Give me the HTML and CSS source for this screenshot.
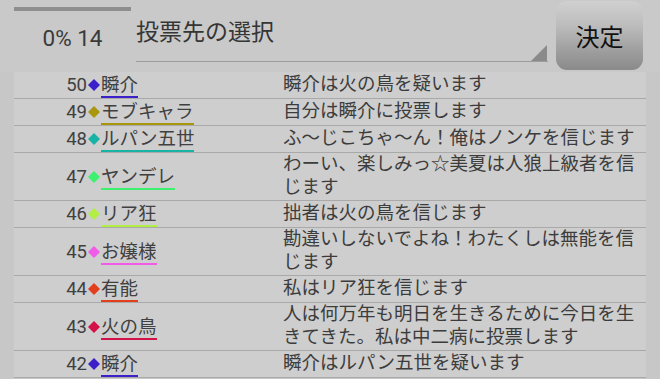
FILE: index.html
```html
<!DOCTYPE html>
<html lang="ja">
<head>
<meta charset="utf-8">
<link rel="stylesheet" href="styles.css">
</head>
<body>
<div class="header">
  <div class="progress-col">
    <div class="progress-bar"></div>
    <div class="progress-text">0% 14</div>
  </div>
  <div class="spinner">
    <span class="spinner-text">投票先の選択</span>
    <span class="spinner-arrow"></span>
  </div>
  <div class="decide-btn">決定</div>
</div>
<div class="list">
  <div class="row">
    <div class="who"><span class="num">50</span><svg class="dia" viewBox="0 0 12 12"><polygon points="6,0 12,6 6,12 0,6" fill="#3b1fc8"/></svg><span class="name c-shun">瞬介</span></div>
    <div class="msg">瞬介は火の鳥を疑います</div>
  </div>
  <div class="row">
    <div class="who"><span class="num">49</span><svg class="dia" viewBox="0 0 12 12"><polygon points="6,0 12,6 6,12 0,6" fill="#a8960f"/></svg><span class="name c-mob">モブキャラ</span></div>
    <div class="msg">自分は瞬介に投票します</div>
  </div>
  <div class="row">
    <div class="who"><span class="num">48</span><svg class="dia" viewBox="0 0 12 12"><polygon points="6,0 12,6 6,12 0,6" fill="#19b3a6"/></svg><span class="name c-lupin">ルパン五世</span></div>
    <div class="msg">ふ〜じこちゃ〜ん！俺はノンケを信じます</div>
  </div>
  <div class="row">
    <div class="who"><span class="num">47</span><svg class="dia" viewBox="0 0 12 12"><polygon points="6,0 12,6 6,12 0,6" fill="#3ef06f"/></svg><span class="name c-yan">ヤンデレ</span></div>
    <div class="msg">わーい、楽しみっ☆美夏は人狼上級者を信じます</div>
  </div>
  <div class="row">
    <div class="who"><span class="num">46</span><svg class="dia" viewBox="0 0 12 12"><polygon points="6,0 12,6 6,12 0,6" fill="#b2ee46"/></svg><span class="name c-ria">リア狂</span></div>
    <div class="msg">拙者は火の鳥を信じます</div>
  </div>
  <div class="row">
    <div class="who"><span class="num">45</span><svg class="dia" viewBox="0 0 12 12"><polygon points="6,0 12,6 6,12 0,6" fill="#f25ae8"/></svg><span class="name c-ojo">お嬢様</span></div>
    <div class="msg">勘違いしないでよね！わたくしは無能を信じます</div>
  </div>
  <div class="row">
    <div class="who"><span class="num">44</span><svg class="dia" viewBox="0 0 12 12"><polygon points="6,0 12,6 6,12 0,6" fill="#e2401c"/></svg><span class="name c-yuno">有能</span></div>
    <div class="msg">私はリア狂を信じます</div>
  </div>
  <div class="row">
    <div class="who"><span class="num">43</span><svg class="dia" viewBox="0 0 12 12"><polygon points="6,0 12,6 6,12 0,6" fill="#d3124a"/></svg><span class="name c-hino">火の鳥</span></div>
    <div class="msg">人は何万年も明日を生きるために今日を生きてきた。私は中二病に投票します</div>
  </div>
  <div class="row">
    <div class="who"><span class="num">42</span><svg class="dia" viewBox="0 0 12 12"><polygon points="6,0 12,6 6,12 0,6" fill="#3b1fc8"/></svg><span class="name c-shun">瞬介</span></div>
    <div class="msg">瞬介はルパン五世を疑います</div>
  </div>
</div>
</body>
</html>
```
FILE: styles.css
```css
html, body {
  margin: 0;
  padding: 0;
}
body {
  width: 660px;
  height: 379px;
  overflow: hidden;
  background: #c7c7c7;
  font-family: Roboto, "Noto Sans CJK JP", sans-serif;
  color: #404040;
}
.header {
  display: flex;
  height: 72px;
  background: #c9c9c9;
}
.progress-col {
  width: 117px;
  margin-left: 14px;
  display: flex;
  flex-direction: column;
  align-items: center;
}
.progress-bar {
  width: 100%;
  height: 4px;
  margin-top: 7px;
  background: #8e8e8e;
}
.progress-text {
  margin-top: 13px;
  font-size: 22.5px;
  line-height: 28px;
  color: #3a3a3a;
}
.spinner {
  margin-left: 5px;
  width: 412px;
  height: 61px;
  border-bottom: 1px solid #9c9c9c;
  display: flex;
  align-items: flex-start;
}
.spinner-text {
  flex: 1;
  font-size: 23px;
  line-height: 30px;
  margin-top: 18px;
  color: #353535;
}
.spinner-arrow {
  align-self: flex-end;
  width: 16px;
  height: 16px;
  margin-right: 1px;
  background: #8a8a8a;
  clip-path: polygon(100% 0, 100% 100%, 0 100%);
}
.decide-btn {
  margin-left: 8px;
  margin-top: 1px;
  width: 87px;
  height: 69px;
  border-radius: 11px;
  background: linear-gradient(#d0d0d0 0%, #bdbdbd 35%, #9c9c9c 75%, #8a8a8a 100%);
  display: flex;
  align-items: center;
  justify-content: center;
  font-size: 24px;
  color: #111;
}
.list {
  margin: 0 14px;
  background: #cecece;
}
.row {
  display: grid;
  grid-template-columns: 269px 1fr;
  border-bottom: 1px solid #a9a9a9;
}
.who {
  display: flex;
  align-items: center;
  height: 100%;
  min-height: 26px;
  font-size: 18.5px;
}
.num {
  width: 73px;
  text-align: right;
  line-height: 22px;
}
.dia {
  width: 12px;
  height: 12px;
  margin: 0 1px 0 1px;
  flex: none;
}
.name {
  line-height: 22px;
  border-bottom: 2px solid;
  margin-top: 2px;
}
.c-shun { border-color: #3b1fc8; }
.c-mob { border-color: #a8960f; }
.c-lupin { border-color: #19b3a6; }
.c-yan { border-color: #3ef06f; }
.c-ria { border-color: #b2ee46; }
.c-ojo { border-color: #f25ae8; }
.c-yuno { border-color: #e2401c; }
.c-hino { border-color: #d3124a; }
.msg {
  align-self: center;
  font-size: 18.5px;
  line-height: 23px;
  padding-bottom: 1px;
  color: #3c3c3c;
}
```
